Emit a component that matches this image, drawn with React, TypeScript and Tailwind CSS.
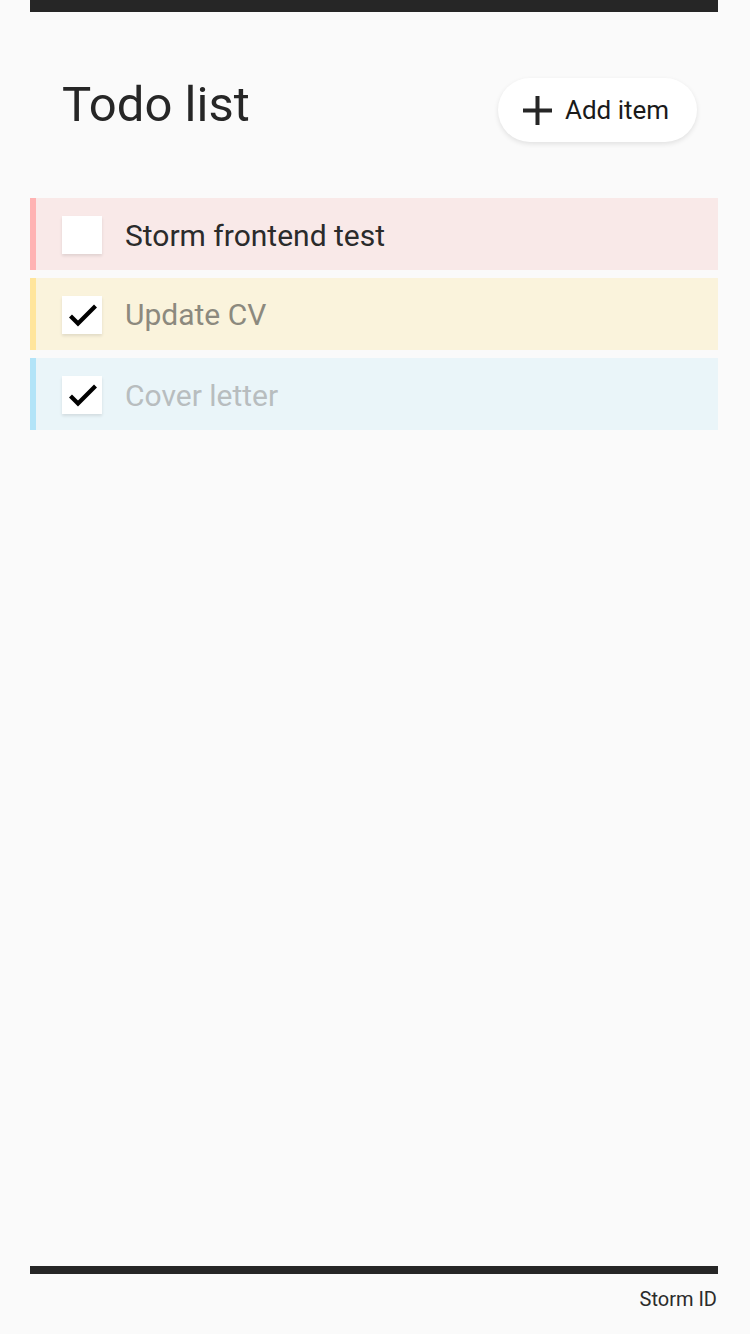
import React from "react";

type Item = {
  label: string;
  done: boolean;
  bg: string;
  border: string;
  text: string;
};

const items: Item[] = [
  { label: "Storm frontend test", done: false, bg: "bg-[#f9e9e8]", border: "border-[#ffb3b3]", text: "text-[#2b2b2b] mt-[4px]" },
  { label: "Update CV", done: true, bg: "bg-[#faf3dc]", border: "border-[#ffe59c]", text: "text-[#8c897e] mt-[2px]" },
  { label: "Cover letter", done: true, bg: "bg-[#eaf5f9]", border: "border-[#b3e4f8]", text: "text-[#b8bdbf] mt-[3px]" },
];

function Check() {
  return (
    <svg width="40" height="38" viewBox="0 0 40 38" fill="none">
      <path d="M8.5 20 L16 27.5 L33.5 10" stroke="#000" strokeWidth="4.2" strokeLinecap="butt" strokeLinejoin="miter" />
    </svg>
  );
}

export default function App() {
  return (
    <div className="min-h-[1334px] bg-[#fafafa] flex flex-col" style={{ fontFamily: "Roboto, 'Noto Sans', sans-serif" }}>
      <div className="ml-[30px] w-[688px] flex-1 flex flex-col">
        <div className="h-[12px] bg-[#262626]" />
        <div className="flex justify-between items-start pt-[66px]">
          <h1 className="pl-[32px] mt-[3px] text-[49px] leading-[48px] text-[#262626] font-normal">Todo list</h1>
          <button className="mr-[21px] w-[199px] h-[64px] rounded-full bg-white shadow-[0_2px_5px_rgba(0,0,0,0.10)] flex items-center pl-[25px] gap-[13px] text-[26px] text-[#1a1a1a]">
            <svg width="29" height="29" viewBox="0 0 29 29">
              <rect x="12.5" y="0" width="4" height="29" fill="#262626" />
              <rect x="0" y="12.5" width="29" height="4" fill="#262626" />
            </svg>
            <span className="leading-none">Add item</span>
          </button>
        </div>
        <div className="mt-[56px] flex flex-col gap-[8px]">
          {items.map((it) => (
            <div key={it.label} className={`h-[72px] border-l-[6px] ${it.border} ${it.bg} flex items-center pl-[26px]`}>
              <div className="w-[40px] h-[38px] bg-white shadow-[0_2px_3px_rgba(0,0,0,0.10)] flex items-center justify-center mt-[1px]">
                {it.done && <Check />}
              </div>
              <span className={`ml-[23px] text-[30px] leading-none ${it.text}`}>{it.label}</span>
            </div>
          ))}
        </div>
        <div className="flex-1" />
        <div className="h-[8px] bg-[#262626]" />
        <div className="pt-[15px] pb-[25px] text-right text-[20px] leading-[20px] text-[#2b2b2b] pr-[1px]">Storm ID</div>
      </div>
    </div>
  );
}
